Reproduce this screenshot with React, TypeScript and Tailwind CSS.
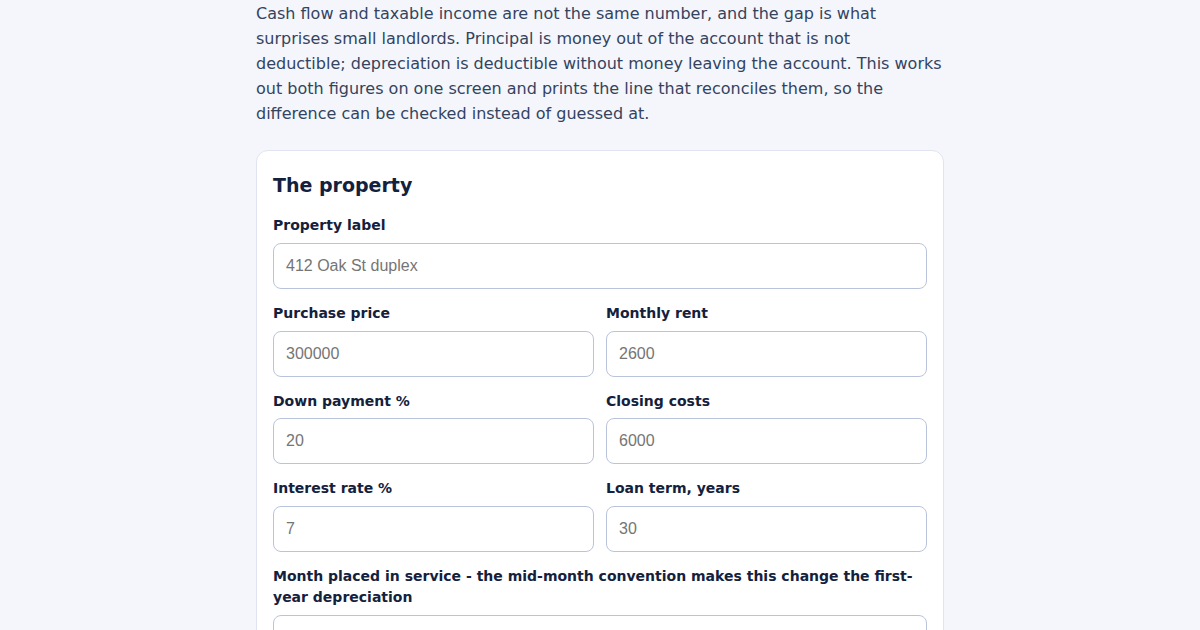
import React from "react";

type Field = {
  label: string;
  placeholder: string;
};

const pairs: Field[][] = [
  [
    { label: "Purchase price", placeholder: "300000" },
    { label: "Monthly rent", placeholder: "2600" },
  ],
  [
    { label: "Down payment %", placeholder: "20" },
    { label: "Closing costs", placeholder: "6000" },
  ],
  [
    { label: "Interest rate %", placeholder: "7" },
    { label: "Loan term, years", placeholder: "30" },
  ],
];

const Input = ({ placeholder }: { placeholder: string }) => (
  <input
    type="text"
    placeholder={placeholder}
    className="w-full h-[46px] px-3 rounded-lg border border-[#b9c4dc] bg-white text-[16px] text-[#14213d] placeholder:text-[#757575] outline-none font-['Liberation_Sans',Arial,sans-serif]"
  />
);

const FieldBox = ({ label, placeholder }: Field) => (
  <label className="block">
    <span className="block mb-[6.75px] text-[14px] leading-[21px] font-bold text-[#14213d]">
      {label}
    </span>
    <Input placeholder={placeholder} />
  </label>
);

export default function App() {
  return (
    <div className="min-h-screen bg-[#f4f6fb] font-['DejaVu_Sans',sans-serif]">
      <div className="max-w-[688px] mx-auto pt-px pb-10">
        <p className="text-[16px] leading-[25px] text-[#334360]">
          Cash flow and taxable income are not the same number, and the gap is what
          surprises small landlords. Principal is money out of the account that is not
          deductible; depreciation is deductible without money leaving the account. This
          works out both figures on one screen and prints the line that reconciles them,
          so the difference can be checked instead of guessed at.
        </p>

        <div className="mt-6 bg-white border border-[#dfe4f0] rounded-xl px-4 pt-5 pb-5">
          <h2 className="text-[19px] leading-[28px] font-bold text-[#13213f] mb-4">
            The property
          </h2>

          <div className="flex flex-col gap-[14px]">
            <FieldBox label="Property label" placeholder="412 Oak St duplex" />

            {pairs.map((row, i) => (
              <div key={i} className="grid grid-cols-2 gap-3">
                {row.map((f) => (
                  <FieldBox key={f.label} label={f.label} placeholder={f.placeholder} />
                ))}
              </div>
            ))}

            <FieldBox
              label="Month placed in service - the mid-month convention makes this change the first-year depreciation"
              placeholder=""
            />
          </div>
        </div>
      </div>
    </div>
  );
}
